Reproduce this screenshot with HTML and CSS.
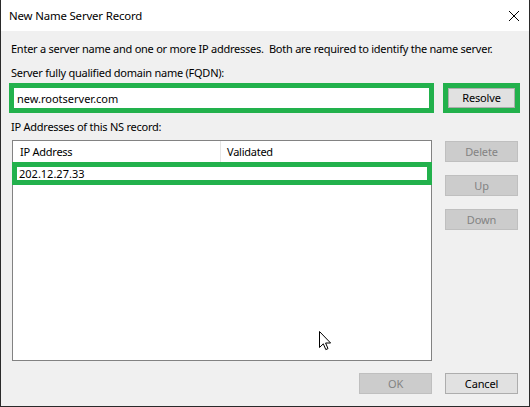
FILE: index.html
```html
<!DOCTYPE html>
<html>
<head>
<meta charset="utf-8">
<link rel="stylesheet" href="styles.css">
</head>
<body>
<div class="window">
  <div class="titlebar">
    <span class="title">New Name Server Record</span>
    <svg class="close" width="12" height="12" viewBox="0 0 12 12"><path d="M1 1 L11 11 M11 1 L1 11" stroke="#000" stroke-width="1" fill="none"/></svg>
  </div>
  <div class="body">
    <p class="intro">Enter a server name and one or more IP addresses.&nbsp; Both are required to identify the name server.</p>
    <p class="label label-fqdn">Server fully qualified domain name (FQDN):</p>
    <div class="fqdn-row">
      <div class="hl fqdn-box"><span class="fqdn-text">new.rootserver.com</span></div>
      <div class="hl resolve-wrap"><button class="btn">Resolve</button></div>
    </div>
    <p class="label label-ip">IP Addresses of this NS record:</p>
    <div class="ip-row">
      <div class="listbox">
        <div class="lv-header">
          <div class="col col-ip">IP Address</div>
          <div class="col col-val">Validated</div>
        </div>
        <div class="hl lv-row">202.12.27.33</div>
      </div>
      <div class="side-buttons">
        <button class="btn" disabled>Delete</button>
        <button class="btn" disabled>Up</button>
        <button class="btn" disabled>Down</button>
      </div>
    </div>
    <div class="footer">
      <button class="btn" disabled>OK</button>
      <button class="btn">Cancel</button>
    </div>
  </div>
  <svg class="cursor" width="13" height="20" viewBox="0 0 13 20"><path d="M0.5 0.5 L0.5 16.5 L4.3 12.8 L6.8 18.6 L9 17.6 L6.6 12 L11.6 12 Z" fill="#fff" stroke="#000" stroke-width="1" stroke-linejoin="round"/></svg>
</div>
</body>
</html>
```
FILE: styles.css
```css
* { box-sizing: border-box; }
html, body { margin: 0; padding: 0; }
body {
  font-family: "Noto Sans", "DejaVu Sans", sans-serif;
  font-size: 11px;
  letter-spacing: -0.25px;
  color: #000;
  background: #f0f0f0;
}
.window {
  position: relative;
  width: 530px;
  height: 407px;
  background: #f0f0f0;
  border-left: 1px solid #2a2a2a;
  border-right: 1px solid #2a2a2a;
  border-bottom: 1px solid #2a2a2a;
  display: flex;
  flex-direction: column;
  overflow: hidden;
}
.titlebar {
  height: 31px;
  background: #fff;
  display: flex;
  align-items: center;
  justify-content: space-between;
  padding: 0 9px 0 8px;
  flex: none;
}
.title { line-height: 16px; font-size: 11.4px; letter-spacing: -0.15px; }
.close { display: block; }
.body {
  padding: 0 11px 0 8px;
  display: flex;
  flex-direction: column;
}
p { margin: 0; line-height: 16px; white-space: nowrap; }
.intro { margin-top: 10px; padding-left: 2px; }
.label { padding-left: 2px; }
.label-fqdn { margin-top: 8px; }
.fqdn-row {
  margin-top: 2px;
  margin-right: -2px;
  display: flex;
  gap: 9px;
  height: 30px;
}
.hl { border: 5px solid #22b14c; }
.fqdn-box {
  flex: 1;
  background: #fff;
  display: flex;
  align-items: center;
  padding-left: 3px;
  letter-spacing: 0;
}
.resolve-wrap {
  width: 77px;
  display: flex;
}
.resolve-wrap .btn { width: 100%; height: 100%; }
.btn {
  font-family: inherit;
  font-size: 11px;
  letter-spacing: -0.15px;
  color: #000;
  background: #e1e1e1;
  border: 1px solid #adadad;
  padding: 0;
  margin: 0;
  border-radius: 0;
  height: 21px;
  width: 73px;
  line-height: 16px;
}
.btn:disabled {
  background: #cccccc;
  border-color: #bfbfbf;
  color: #838383;
}
.label-ip { margin-top: 6px; }
.ip-row {
  margin-top: 5px;
  display: flex;
  gap: 13px;
}
.listbox {
  margin-left: 3px;
  width: 420px;
  height: 221px;
  background: #fff;
  border: 1px solid #828282;
}
.lv-header {
  height: 21px;
  display: flex;
}
.col { line-height: 22px; padding-left: 7px; }
.col-ip { width: 208px; border-right: 1px solid #e5e5e5; }
.col-val { padding-left: 6px; }
.lv-row {
  margin: 0 -1px;
  height: 23px;
  background: #fff;
  padding-left: 2px;
  line-height: 13px;
  letter-spacing: 0;
}
.side-buttons {
  margin-top: 1px;
  display: flex;
  flex-direction: column;
  gap: 13px;
}
.footer {
  margin-top: 12px;
  display: flex;
  justify-content: flex-end;
  gap: 13px;
}
.cursor {
  position: absolute;
  left: 318px;
  top: 331px;
}
```
